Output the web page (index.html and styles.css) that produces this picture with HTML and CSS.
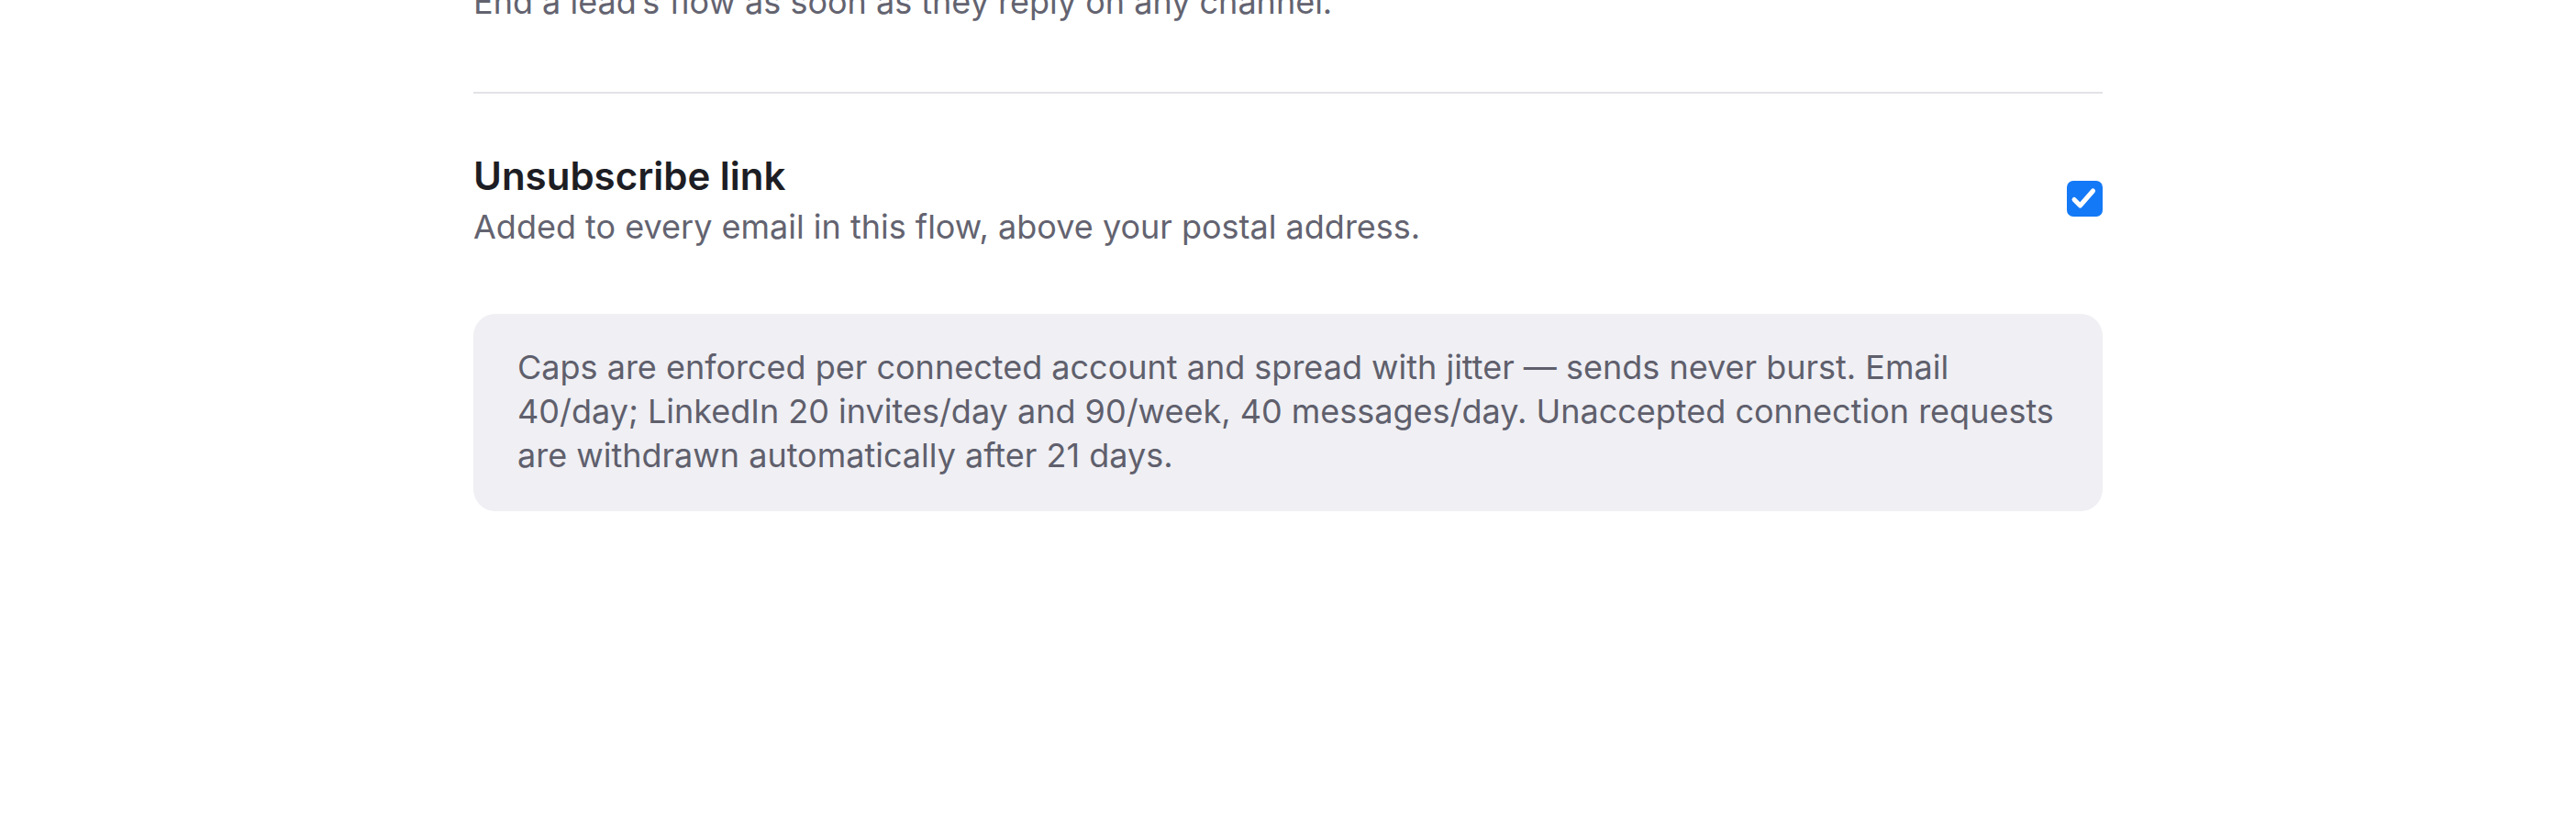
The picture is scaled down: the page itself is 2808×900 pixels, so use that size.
FILE: index.html
```html
<!DOCTYPE html>
<html lang="en">
<head>
<meta charset="utf-8">
<title>Flow settings</title>
<link rel="stylesheet" href="styles.css">
</head>
<body>
<main class="settings">
  <section class="setting setting--prev">
    <p class="setting-desc">End a lead’s flow as soon as they reply on any channel.</p>
  </section>
  <section class="setting">
    <div class="setting-text">
      <h3 class="setting-title">Unsubscribe link</h3>
      <p class="setting-desc">Added to every email in this flow, above your postal address.</p>
    </div>
    <label class="check">
      <input type="checkbox" checked>
      <span class="check-box">
        <svg viewBox="0 0 39 39" width="39" height="39"><path d="M8 20.5L14.5 27L28.5 11" fill="none" stroke="#fff" stroke-width="5" stroke-linecap="round" stroke-linejoin="round"/></svg>
      </span>
    </label>
  </section>
  <div class="note">Caps are enforced per connected account and spread with jitter — sends never burst. Email 40/day; LinkedIn 20 invites/day and 90/week, 40 messages/day. Unaccepted connection requests are withdrawn automatically after 21 days.</div>
</main>
</body>
</html>
```

FILE: styles.css
```css
html, body {
  margin: 0;
  padding: 0;
  background: #ffffff;
}
body {
  font-family: Inter, "Noto Sans", "Liberation Sans", sans-serif;
  -webkit-font-smoothing: antialiased;
}
.settings {
  width: 1776px;
  margin: -22px auto 0;
}
.setting {
  display: flex;
  align-items: center;
  justify-content: space-between;
  gap: 48px;
  padding: 66px 0 71px;
}
.setting--prev {
  padding: 0 0 74px;
  border-bottom: 2px solid #e2e2e7;
}
.setting-text {
  display: flex;
  flex-direction: column;
  gap: 7px;
}
.setting-title {
  margin: 0;
  font-size: 42px;
  line-height: 48px;
  font-weight: 600;
  color: #1d1d24;
}
.setting-desc {
  margin: 0;
  font-size: 36px;
  line-height: 48px;
  color: #636370;
}
.check {
  position: relative;
  width: 39px;
  height: 39px;
  flex: none;
  margin-bottom: 6px;
}
.check input {
  position: absolute;
  opacity: 0;
  margin: 0;
  width: 100%;
  height: 100%;
}
.check-box {
  display: block;
  width: 39px;
  height: 39px;
  border-radius: 7px;
  background: #1479f6;
}
.check-box svg {
  display: block;
}
.note {
  background: #efeff4;
  border-radius: 24px;
  padding: 34px 48px 37px;
  font-size: 36px;
  line-height: 48px;
  color: #5f5f6c;
}
```
